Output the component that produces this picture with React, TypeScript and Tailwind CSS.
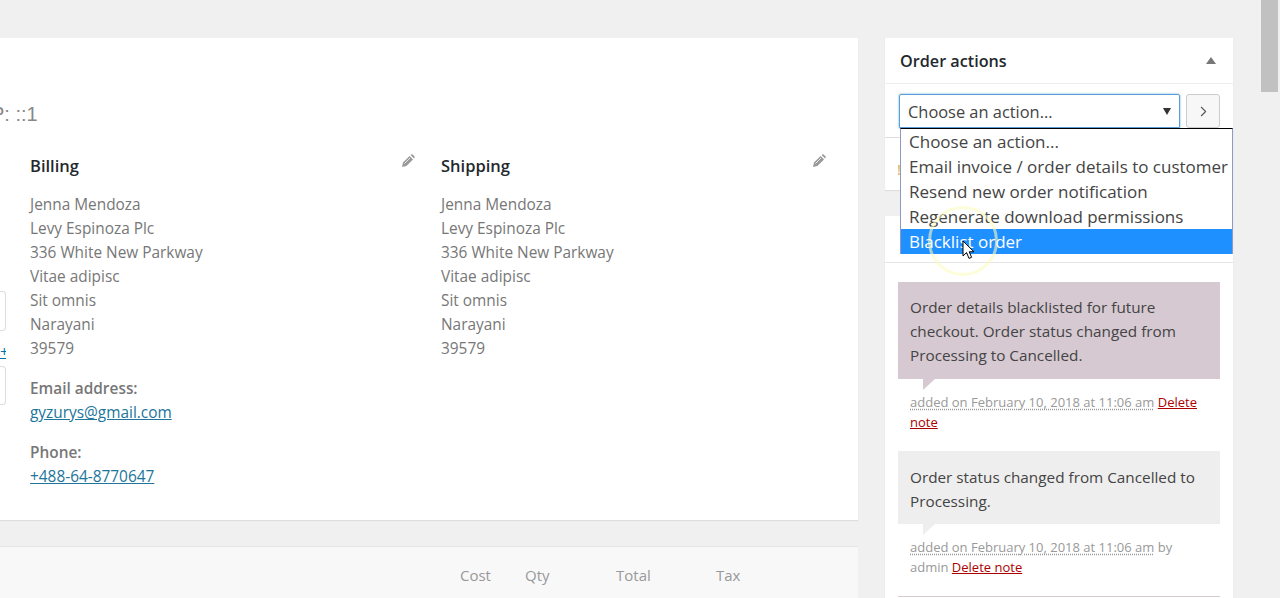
import { ChevronRight } from "lucide-react";

const address = ["Jenna Mendoza", "Levy Espinoza Plc", "336 White New Parkway", "Vitae adipisc", "Sit omnis", "Narayani", "39579"];
const actions = ["Choose an action...", "Email invoice / order details to customer", "Resend new order notification", "Regenerate download permissions"];

function Address({ title, children }: { title: string; children?: React.ReactNode }) {
  return (
    <div className="w-[411px] pr-[22px]">
      <div className="flex items-start justify-between h-[36px]">
        <h3 className="text-[16.5px] leading-[30px] mt-[1px] font-semibold text-[#23282d]">{title}</h3>
        <EditIcon />
      </div>
      <div className="pt-[7px] text-[15.4px] leading-[24px] text-[#777]">
        {address.map((line) => (
          <p key={line}>{line}</p>
        ))}
      </div>
      {children}
    </div>
  );
}

function EditIcon() {
  return (
    <svg width="14" height="14" viewBox="0 0 14 14" className="mt-[4px] mr-[4px]">
      <path d="M1 13L2 8.6L8.6 2L12 5.4L5.4 12Z" fill="#999" />
      <path d="M9.6 1L10.4 0.4C10.8 0.1 11.2 0.1 11.6 0.4L13.6 2.4C13.9 2.8 13.9 3.2 13.6 3.6L13 4.4Z" fill="#999" />
      <path d="M3.4 9.6L9 4" stroke="#fff" strokeWidth="0.8" />
    </svg>
  );
}

function Note({ bg, pad, children, meta }: { bg: string; pad: string; children: React.ReactNode; meta: React.ReactNode }) {
  return (
    <div className="mb-[19px]">
      <div className={`relative px-[12px] text-[15.3px] leading-[24px] text-[#444] ${pad} ${bg}`}>
        {children}
        <svg width="12" height="12" viewBox="0 0 12 12" className="absolute left-[25px] top-full">
          <path d="M0 0H12L0 11Z" fill={bg === "bg-[#d6c9d2]" ? "#d6c9d2" : "#eeeeee"} />
        </svg>
      </div>
      <p className="px-[12px] pt-[13px] text-[13px] leading-[20px] text-[#999]">{meta}</p>
    </div>
  );
}

function Added() {
  return <span className="underline decoration-dotted decoration-[#999] underline-offset-2">added on February 10, 2018 at 11:06 am</span>;
}

export default function App() {
  return (
    <div className="relative flex h-[598px] w-[1280px] overflow-hidden bg-[#f0f0f0] font-['Open_Sans','Noto_Sans',sans-serif]">
      <div className="w-[858px] shrink-0 pt-[38px]">
        <div className="h-[482px] bg-white shadow-[0_1px_1px_rgba(0,0,0,0.08)] overflow-hidden">
          <p className="mt-[61px] -ml-[9px] h-[30px] text-[20px] leading-[30px] text-[#888] font-['Liberation_Sans',sans-serif]">P: ::1</p>
          <div className="flex pt-[21px]">
            <div className="w-[30px] shrink-0 overflow-hidden flex flex-col items-start pt-[141px]">
              <div className="h-[40px] w-[6px] rounded-r border border-l-0 border-[#ddd]" />
              <span className="mt-[8px] text-[15px] leading-[24px] text-[#0073aa] underline w-[6px] overflow-hidden">+</span>
              <div className="mt-[3px] h-[39px] w-[6px] rounded-r border border-l-0 border-[#ddd]" />
            </div>
            <Address title="Billing">
              <div className="mt-[16px] text-[15.4px] leading-[24px]">
                <p className="font-semibold text-[#777]">Email address:</p>
                <a className="text-[#21759b] underline">gyzurys@gmail.com</a>
                <p className="mt-[16px] font-semibold text-[#777]">Phone:</p>
                <a className="text-[#21759b] underline">+488-64-8770647</a>
              </div>
            </Address>
            <Address title="Shipping" />
          </div>
        </div>
        <div className="mt-[26px] h-[60px] bg-[#f8f8f8] border-t border-[#e5e5e5] flex pt-[16px] text-[15px] leading-[24px] text-[#999]">
          <span className="ml-[460px] w-[65px]">Cost</span>
          <span className="w-[91px]">Qty</span>
          <span className="w-[100px]">Total</span>
          <span>Tax</span>
        </div>
      </div>

      <div className="ml-[27px] w-[348px] shrink-0 pt-[38px]">
        <div className="relative h-[152px] bg-white shadow-[0_1px_1px_rgba(0,0,0,0.08)]">
          <div className="flex h-[46px] items-center justify-between border-b border-[#eee] pl-[15px] pr-[17px]">
            <h2 className="mt-[1px] text-[16.2px] font-semibold text-[#23282d]">Order actions</h2>
            <span className="h-0 w-0 border-x-[5px] border-b-[7px] border-x-transparent border-b-[#777]" />
          </div>
          <div className="flex h-[54px] gap-[6px] border-b border-[#ddd] pl-[14px] pt-[10px]">
            <div className="flex h-[34px] w-[281px] items-center justify-between rounded-t-[2px] border border-[#5b9dd9] pl-[8px] pr-[8px] text-[16.4px] text-[#444] shadow-[0_0_2px_rgba(30,140,190,0.8)]">
              <span className="mt-[3px]">Choose an action...</span>
              <span className="h-0 w-0 border-x-[4px] border-t-[7px] border-x-transparent border-t-[#333]" />
            </div>
            <button className="flex h-[34px] w-[34px] items-center justify-center rounded-[3px] border border-[#ccc] bg-[#f7f7f7] text-[#555]">
              <ChevronRight size={17} strokeWidth={1.5} />
            </button>
          </div>
          <span className="block pl-[12px] pt-[20px] text-[15px] text-[#d8b04a]">!</span>

          <div className="absolute left-[15px] top-[90px] z-10 w-[333px] border-t border-t-black border-x border-x-[#8f99c8] bg-white text-[17px] leading-[25px] text-[#444]">
            {actions.map((a) => (
              <div key={a} className="pl-[8px] whitespace-nowrap">{a}</div>
            ))}
            <div className="bg-[#1e90ff] pl-[8px] text-white">Blacklist order</div>
          </div>
        </div>

        <div className="mt-[26px] h-[400px] bg-white shadow-[0_1px_1px_rgba(0,0,0,0.08)]">
          <div className="h-[47px] border-b border-[#e5e5e5]" />
          <div className="pl-[13px] pr-[13px] pt-[19px]">
            <Note
              bg="bg-[#d6c9d2]"
              pad="pt-[13px] pb-[12px]"
              meta={<><Added /> <a className="text-[#a00] underline">Delete note</a></>}
            >
              Order details blacklisted for future checkout. Order status changed from Processing to Cancelled.
            </Note>
            <Note
              bg="bg-[#eeeeee]"
              pad="pt-[14px] pb-[11px]"
              meta={<><Added /> by admin <a className="text-[#a00] underline">Delete note</a></>}
            >
              Order status changed from Cancelled to Processing.
            </Note>
            <div className="border-t border-[#d6c9d2]" />
          </div>
        </div>
      </div>

      <div className="ml-auto mr-[2px] w-[17px] shrink-0">
        <div className="h-[92px] bg-[#c1c1c1]" />
      </div>

      {/* click highlight + cursor */}
      <div className="pointer-events-none absolute left-[928px] top-[206px] z-20 h-[70px] w-[70px] rounded-full border-[3px] border-[#fdfcc0]/60" />
      <svg width="14" height="20" viewBox="0 0 14 20" className="pointer-events-none absolute left-[962px] top-[240px] z-30">
        <path d="M1 1V16L4.6 12.6L7 18.4L9.6 17.3L7.2 11.8H12Z" fill="#fff" stroke="#000" strokeWidth="1" />
      </svg>
    </div>
  );
}
